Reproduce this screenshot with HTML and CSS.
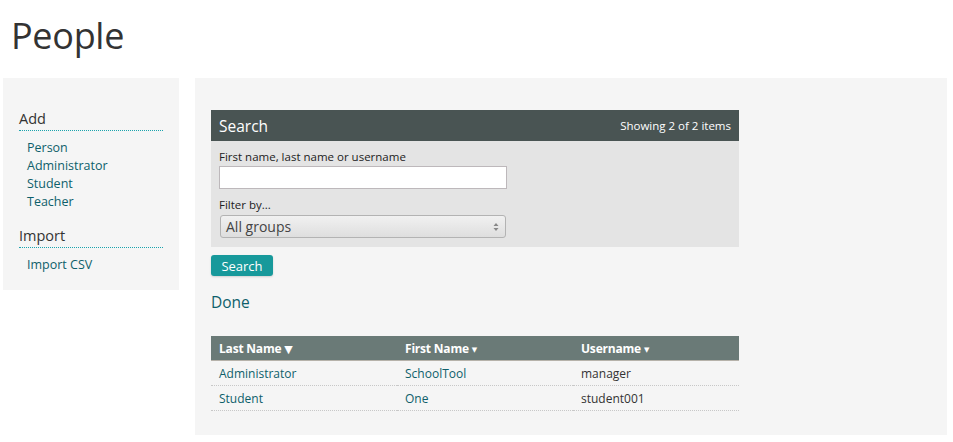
FILE: index.html
```html
<!DOCTYPE html>
<html>
<head>
<meta charset="utf-8">
<link rel="stylesheet" href="styles.css">
</head>
<body>
<h1 class="title">People</h1>
<div class="layout">
  <aside class="sidebar">
    <h3 class="side-head">Add</h3>
    <ul class="side-links">
      <li><a href="#">Person</a></li>
      <li><a href="#">Administrator</a></li>
      <li><a href="#">Student</a></li>
      <li><a href="#">Teacher</a></li>
    </ul>
    <h3 class="side-head">Import</h3>
    <ul class="side-links">
      <li><a href="#">Import CSV</a></li>
    </ul>
  </aside>
  <main class="content">
    <div class="search-panel">
      <div class="search-head">
        <span class="search-title">Search</span>
        <span class="search-count">Showing 2 of 2 items</span>
      </div>
      <div class="search-body">
        <label class="field-label">First name, last name or username</label>
        <input class="text-input" type="text">
        <label class="field-label filter-label">Filter by...</label>
        <div class="select-box">
          <span>All groups</span>
          <svg class="select-arrows" width="6" height="10" viewBox="0 0 6 10"><path d="M0.5 4 L3 1 L5.5 4 Z M0.5 6 L3 9 L5.5 6 Z" fill="#888"/></svg>
        </div>
      </div>
    </div>
    <button class="search-btn">Search</button>
    <h4 class="done">Done</h4>
    <table class="results">
      <thead>
        <tr>
          <th class="col1">Last Name <span class="arrow-big">▼</span></th>
          <th class="col2">First Name <span class="arrow-small">▼</span></th>
          <th class="col3">Username <span class="arrow-small">▼</span></th>
        </tr>
      </thead>
      <tbody>
        <tr><td><a href="#">Administrator</a></td><td><a href="#">SchoolTool</a></td><td>manager</td></tr>
        <tr><td><a href="#">Student</a></td><td><a href="#">One</a></td><td>student001</td></tr>
      </tbody>
    </table>
  </main>
</div>
</body>
</html>
```
FILE: styles.css
```css
body {
  margin: 0;
  background: #ffffff;
  font-family: "Open Sans", "DejaVu Sans", sans-serif;
  color: #333333;
}
.title {
  margin: 0;
  padding: 13px 0 0 11px;
  height: 65px;
  box-sizing: border-box;
  font-size: 36px;
  font-weight: 400;
  letter-spacing: -0.3px;
  color: #333;
  line-height: 46px;
}
.layout {
  display: flex;
  align-items: flex-start;
  margin-top: 13px;
  padding-left: 3px;
  gap: 16px;
}
.sidebar {
  width: 176px;
  box-sizing: border-box;
  background: #f5f5f5;
  padding: 32px 16px 16px 16px;
}
.side-head {
  margin: 0;
  font-size: 14.5px;
  font-weight: 400;
  color: #333;
  line-height: 18px;
  padding-bottom: 2px;
  border-bottom: 1px dotted #1aa3ad;
}
.side-links {
  list-style: none;
  margin: 8px 0 16px 8px;
  padding: 0;
}
.side-links li {
  font-size: 12.5px;
  line-height: 18px;
}
.side-links a, .results a, .done {
  color: #0e5f6b;
  text-decoration: none;
}
.side-links:last-child { margin-bottom: 0; }
.content {
  width: 752px;
  box-sizing: border-box;
  background: #f5f5f5;
  padding: 32px 16px 23px 16px;
  min-height: 357px;
}
.search-panel {
  width: 528px;
}
.search-head {
  display: flex;
  justify-content: space-between;
  align-items: center;
  height: 31px;
  background: #495453;
  color: #fff;
  padding: 0 8px;
}
.search-title {
  font-size: 15.5px;
}
.search-count {
  font-size: 11.5px;
}
.search-body {
  background: #e4e4e4;
  padding: 7px 8px 9px 8px;
  display: flex;
  flex-direction: column;
  align-items: flex-start;
}
.field-label {
  font-size: 11.5px;
  color: #222;
  line-height: 17px;
}
.filter-label {
  margin-top: 7px;
}
.text-input {
  width: 288px;
  height: 23px;
  box-sizing: border-box;
  border: 1px solid #bdb8bb;
  background: #fff;
  margin: 1px 0 0 0;
  padding: 0;
}
.select-box {
  width: 286px;
  height: 23px;
  box-sizing: border-box;
  margin: 2px 0 0 1px;
  border: 1px solid #b3b3b3;
  border-radius: 3px;
  background: linear-gradient(#f1f1f1, #dedede);
  display: flex;
  justify-content: space-between;
  align-items: center;
  padding: 0 6px 0 5px;
  font-size: 14px;
  color: #444;
}
.search-btn {
  margin-top: 8px;
  display: block;
  background: #17999b;
  color: #fff;
  border: none;
  border-radius: 3px;
  font-family: inherit;
  font-size: 13px;
  height: 21px;
  width: 62px;
  padding: 0;
  box-shadow: 0 1px 2px rgba(0,0,0,0.15);
}
.done {
  margin: 16px 0 24px 0;
  font-size: 15.5px;
  font-weight: 400;
  line-height: 20px;
}
.results {
  width: 528px;
  border-collapse: collapse;
  font-size: 12px;
}
.results thead th {
  background: #6a7a77;
  color: #fff;
  font-weight: 700;
  text-align: left;
  height: 24px;
  padding: 0 8px;
  border-bottom: 1px solid #b6b2aa;
  letter-spacing: -0.2px;
}
.col1 { width: 170px; }
.col2 { width: 160px; }
.arrow-big { font-size: 11px; }
.arrow-small { font-size: 7px; vertical-align: 1px; }
.results td {
  height: 24px;
  padding: 0 8px;
  border-bottom: 1px dotted #c8c8c8;
  color: #333;
}
```
